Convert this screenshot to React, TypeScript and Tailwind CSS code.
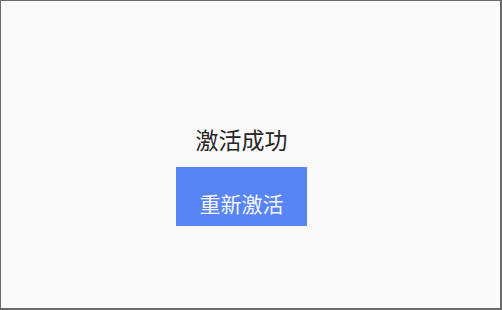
export default function App() {
  return (
    <div
      className="w-[502px] h-[310px] box-border bg-[#fafafa] border-l border-t border-r-2 border-b-2 border-[#6a6a6a] flex flex-col items-center pt-[123px] pr-[18px]"
      style={{ fontFamily: '"Noto Sans CJK SC", "Noto Sans", sans-serif' }}
    >
      <div className="text-[23px] leading-[30px] text-[#262626]">激活成功</div>
      <button className="mt-[13px] w-[131px] h-[59px] bg-[#5885f6] text-[#f4f6fb] text-[21px] leading-[28px] flex items-center justify-center pt-[13px]">
        重新激活
      </button>
    </div>
  );
}
